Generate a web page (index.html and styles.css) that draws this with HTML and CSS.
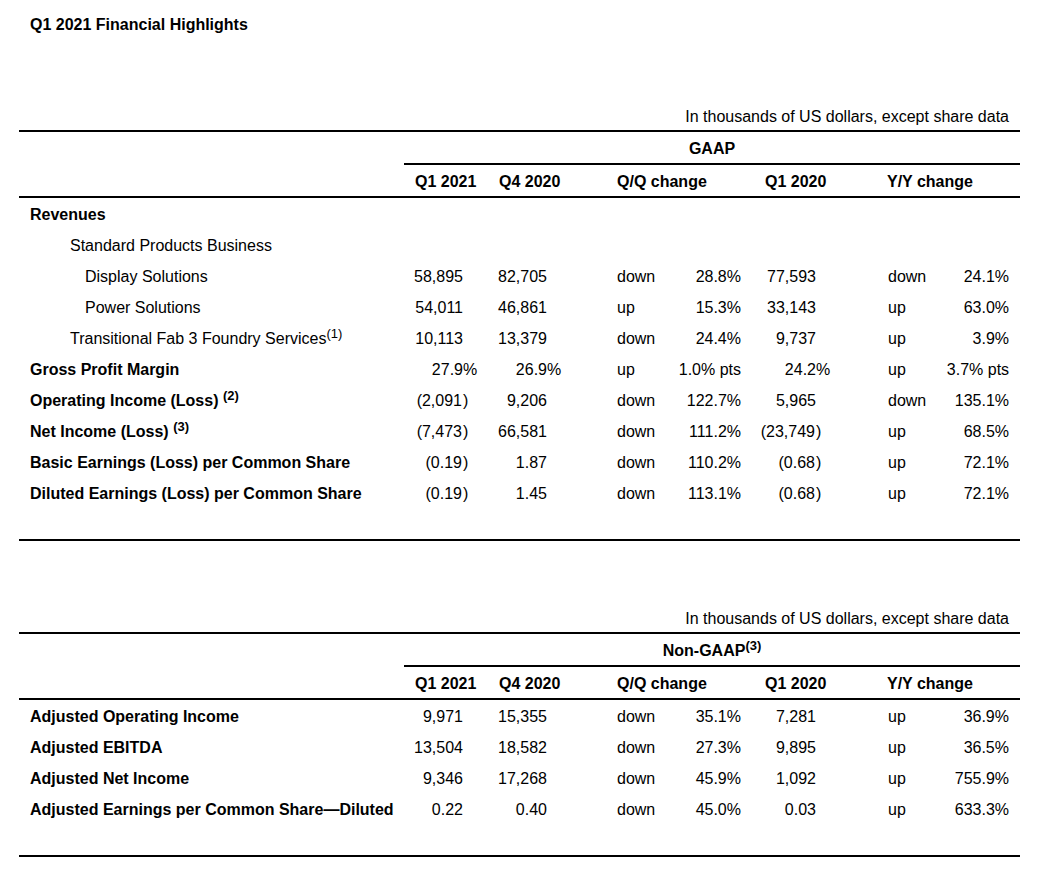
FILE: index.html
```html
<!DOCTYPE html>
<html lang="en">
<head>
<meta charset="utf-8">
<title>Q1 2021 Financial Highlights</title>
<link rel="stylesheet" href="styles.css">
</head>
<body>
<div class="page">
  <h1 class="title">Q1 2021 Financial Highlights</h1>

  <section class="block first">
    <div class="note">In thousands of US dollars, except share data</div>
    <table class="fin">
      <colgroup>
        <col class="w-lbl"><col class="w-q1"><col class="w-q4"><col class="w-dir"><col class="w-pct"><col class="w-py"><col class="w-dir2"><col class="w-pct2">
      </colgroup>
      <thead>
        <tr class="group"><th class="blank"></th><th colspan="7" class="gname">GAAP</th></tr>
        <tr class="cols">
          <th class="blank"></th>
          <th class="h-q1">Q1 2021</th>
          <th class="h-q4">Q4 2020</th>
          <th colspan="2" class="h-chg">Q/Q change</th>
          <th class="h-py">Q1 2020</th>
          <th colspan="2" class="h-chg2">Y/Y change</th>
        </tr>
      </thead>
      <tbody>
        <tr><td class="lbl b">Revenues</td><td></td><td></td><td></td><td></td><td></td><td></td><td></td></tr>
        <tr><td class="lbl i1">Standard Products Business</td><td></td><td></td><td></td><td></td><td></td><td></td><td></td></tr>
        <tr><td class="lbl i2">Display Solutions</td><td class="n1">58,895</td><td class="n2">82,705</td><td class="dir">down</td><td class="pct">28.8%</td><td class="n3">77,593</td><td class="dir2">down</td><td class="pct2">24.1%</td></tr>
        <tr><td class="lbl i2">Power Solutions</td><td class="n1">54,011</td><td class="n2">46,861</td><td class="dir">up</td><td class="pct">15.3%</td><td class="n3">33,143</td><td class="dir2">up</td><td class="pct2">63.0%</td></tr>
        <tr><td class="lbl i1">Transitional Fab 3 Foundry Services<sup>(1)</sup></td><td class="n1">10,113</td><td class="n2">13,379</td><td class="dir">down</td><td class="pct">24.4%</td><td class="n3">9,737</td><td class="dir2">up</td><td class="pct2">3.9%</td></tr>
        <tr><td class="lbl b">Gross Profit Margin</td><td class="n1">27.9<span class="h">%</span></td><td class="n2">26.9<span class="h">%</span></td><td class="dir">up</td><td class="pct">1.0% pts</td><td class="n3">24.2<span class="h">%</span></td><td class="dir2">up</td><td class="pct2">3.7% pts</td></tr>
        <tr><td class="lbl b">Operating Income (Loss) <sup>(2)</sup></td><td class="n1">(2,091<span class="h p">)</span></td><td class="n2">9,206</td><td class="dir">down</td><td class="pct">122.7%</td><td class="n3">5,965</td><td class="dir2">down</td><td class="pct2">135.1%</td></tr>
        <tr><td class="lbl b">Net Income (Loss) <sup>(3)</sup></td><td class="n1">(7,473<span class="h p">)</span></td><td class="n2">66,581</td><td class="dir">down</td><td class="pct">111.2%</td><td class="n3">(23,749<span class="h p">)</span></td><td class="dir2">up</td><td class="pct2">68.5%</td></tr>
        <tr><td class="lbl b">Basic Earnings (Loss) per Common Share</td><td class="n1">(0.19<span class="h p">)</span></td><td class="n2">1.87</td><td class="dir">down</td><td class="pct">110.2%</td><td class="n3">(0.68<span class="h p">)</span></td><td class="dir2">up</td><td class="pct2">72.1%</td></tr>
        <tr><td class="lbl b">Diluted Earnings (Loss) per Common Share</td><td class="n1">(0.19<span class="h p">)</span></td><td class="n2">1.45</td><td class="dir">down</td><td class="pct">113.1%</td><td class="n3">(0.68<span class="h p">)</span></td><td class="dir2">up</td><td class="pct2">72.1%</td></tr>
        <tr class="spacer"><td colspan="8">&nbsp;</td></tr>
      </tbody>
    </table>
  </section>

  <section class="block second">
    <div class="note">In thousands of US dollars, except share data</div>
    <table class="fin">
      <colgroup>
        <col class="w-lbl"><col class="w-q1"><col class="w-q4"><col class="w-dir"><col class="w-pct"><col class="w-py"><col class="w-dir2"><col class="w-pct2">
      </colgroup>
      <thead>
        <tr class="group"><th class="blank"></th><th colspan="7" class="gname">Non-GAAP<sup>(3)</sup></th></tr>
        <tr class="cols">
          <th class="blank"></th>
          <th class="h-q1">Q1 2021</th>
          <th class="h-q4">Q4 2020</th>
          <th colspan="2" class="h-chg">Q/Q change</th>
          <th class="h-py">Q1 2020</th>
          <th colspan="2" class="h-chg2">Y/Y change</th>
        </tr>
      </thead>
      <tbody>
        <tr><td class="lbl b">Adjusted Operating Income</td><td class="n1">9,971</td><td class="n2">15,355</td><td class="dir">down</td><td class="pct">35.1%</td><td class="n3">7,281</td><td class="dir2">up</td><td class="pct2">36.9%</td></tr>
        <tr><td class="lbl b">Adjusted EBITDA</td><td class="n1">13,504</td><td class="n2">18,582</td><td class="dir">down</td><td class="pct">27.3%</td><td class="n3">9,895</td><td class="dir2">up</td><td class="pct2">36.5%</td></tr>
        <tr><td class="lbl b">Adjusted Net Income</td><td class="n1">9,346</td><td class="n2">17,268</td><td class="dir">down</td><td class="pct">45.9%</td><td class="n3">1,092</td><td class="dir2">up</td><td class="pct2">755.9%</td></tr>
        <tr><td class="lbl b">Adjusted Earnings per Common Share—Diluted</td><td class="n1">0.22</td><td class="n2">0.40</td><td class="dir">down</td><td class="pct">45.0%</td><td class="n3">0.03</td><td class="dir2">up</td><td class="pct2">633.3%</td></tr>
        <tr class="spacer"><td colspan="8">&nbsp;</td></tr>
      </tbody>
    </table>
  </section>
</div>
</body>
</html>
```

FILE: styles.css
```css
html, body {
  margin: 0;
  padding: 0;
  background: #ffffff;
}

body {
  font-family: "Liberation Sans", Arial, sans-serif;
  font-size: 16px;
  line-height: 18px;
  color: #000000;
}

.page {
  padding: 16px 23px 0 19px;
}

.title {
  margin: 0;
  padding-left: 11px;
  font-size: 16px;
  line-height: 18px;
  font-weight: bold;
}

.block.first {
  margin-top: 73px;
}

.block.second {
  margin-top: 68px;
}

.note {
  text-align: right;
  padding-right: 11px;
  padding-top: 1px;
  padding-bottom: 4px;
}

.fin {
  width: 1001px;
  table-layout: fixed;
  border-collapse: separate;
  border-spacing: 0;
  border-top: 2px solid #000000;
  border-bottom: 2px solid #000000;
}

.w-lbl { width: 385px; }
.w-q1 { width: 83px; }
.w-q4 { width: 88px; }
.w-dir { width: 95px; }
.w-pct { width: 83px; }
.w-py { width: 92px; }
.w-dir2 { width: 95px; }
.w-pct2 { width: 80px; }

.fin th,
.fin td {
  padding: 8px 0 5px 0;
  font-weight: normal;
  text-align: left;
  white-space: nowrap;
  vertical-align: top;
}

.fin th {
  font-weight: bold;
}

.gname {
  text-align: center !important;
  border-bottom: 2px solid #000000;
}

.cols th {
  border-bottom: 2px solid #000000;
}

.h-q1 { padding-left: 11px !important; }
.h-q4 { padding-left: 12px !important; }
.h-chg { padding-left: 42px !important; }
.h-py { padding-left: 12px !important; }
.h-chg2 { padding-left: 42px !important; }

.lbl { padding-left: 11px !important; }
.lbl.b { font-weight: bold; }
.lbl.i1 { padding-left: 51px !important; }
.lbl.i2 { padding-left: 66px !important; }

.n1 { text-align: right !important; padding-right: 24px !important; }
.n2 { text-align: right !important; padding-right: 28px !important; }
.n3 { text-align: right !important; padding-right: 29px !important; }
.dir { padding-left: 42px !important; }
.dir2 { padding-left: 43px !important; }
.pct { text-align: right !important; padding-right: 12px !important; }
.pct2 { text-align: right !important; padding-right: 11px !important; }

.h {
  display: inline-block;
  width: 0;
  text-align: left;
}

.h.p {
  padding-left: 1px;
}

sup {
  font-size: 13px;
  line-height: 0;
  vertical-align: 6px;
}
```
